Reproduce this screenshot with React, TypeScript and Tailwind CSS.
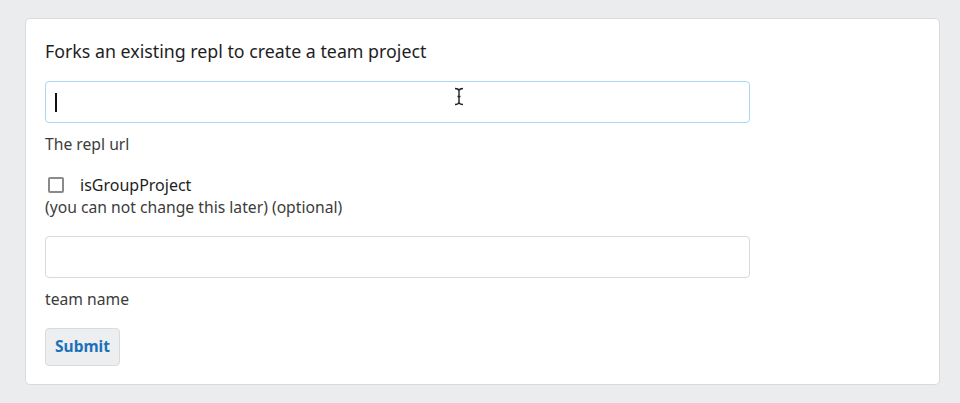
import React from "react";

export default function App() {
  return (
    <div
      className="w-[960px] h-[403px] bg-[#ebecee] pt-[18px] pl-[25px] pr-[20px]"
      style={{ fontFamily: '"Noto Sans", "Open Sans", sans-serif' }}
    >
      <div className="w-[915px] h-[367px] bg-white border border-[#d9dadc] rounded-[5px] pl-[19px] pt-[20px]">
        <div className="text-[17.8px] leading-[24px] text-[#1e1e1e]">
          Forks an existing repl to create a team project
        </div>
        <div className="relative mt-[18px] w-[705px] h-[42px] border border-[#a9d7f3] rounded-[4px] bg-white flex items-center pl-[9px]">
          <div className="w-[2px] h-[19px] bg-[#111]" />
          <svg
            className="absolute left-[408px] top-[5px]"
            width="10"
            height="19"
            viewBox="0 0 10 19"
          >
            <path
              d="M1 1.5 C3 1.5 4.5 2 5 3.5 C5.5 2 7 1.5 9 1.5 M5 3.5 V15.5 M1 17.5 C3 17.5 4.5 17 5 15.5 C5.5 17 7 17.5 9 17.5 M3.5 9.5 H6.5"
              fill="none"
              stroke="#222"
              strokeWidth="1.4"
            />
          </svg>
        </div>
        <div className="mt-[11px] text-[15.7px] leading-[20px] text-[#3c3c3c]">The repl url</div>
        <div className="mt-[20px] flex items-center">
          <div className="ml-[3px] w-[16px] h-[16px] border-2 border-[#8a8a8a] rounded-[2px] bg-white" />
          <span className="ml-[16px] text-[16px] leading-[22px] text-[#1e1e1e]">isGroupProject</span>
        </div>
        <div className="mt-[1px] text-[15.7px] leading-[20px] text-[#3c3c3c]">
          (you can not change this later) (optional)
        </div>
        <div className="mt-[19px] w-[705px] h-[42px] border border-[#d9d9d9] rounded-[4px] bg-white" />
        <div className="mt-[11px] text-[15.7px] leading-[20px] text-[#3c3c3c]">team name</div>
        <button className="mt-[19px] w-[75px] h-[38px] bg-[#eceef0] border border-[#d8dadc] rounded-[4px] text-[15.5px] font-bold text-[#1b71b8] flex items-center justify-center">
          Submit
        </button>
      </div>
    </div>
  );
}
